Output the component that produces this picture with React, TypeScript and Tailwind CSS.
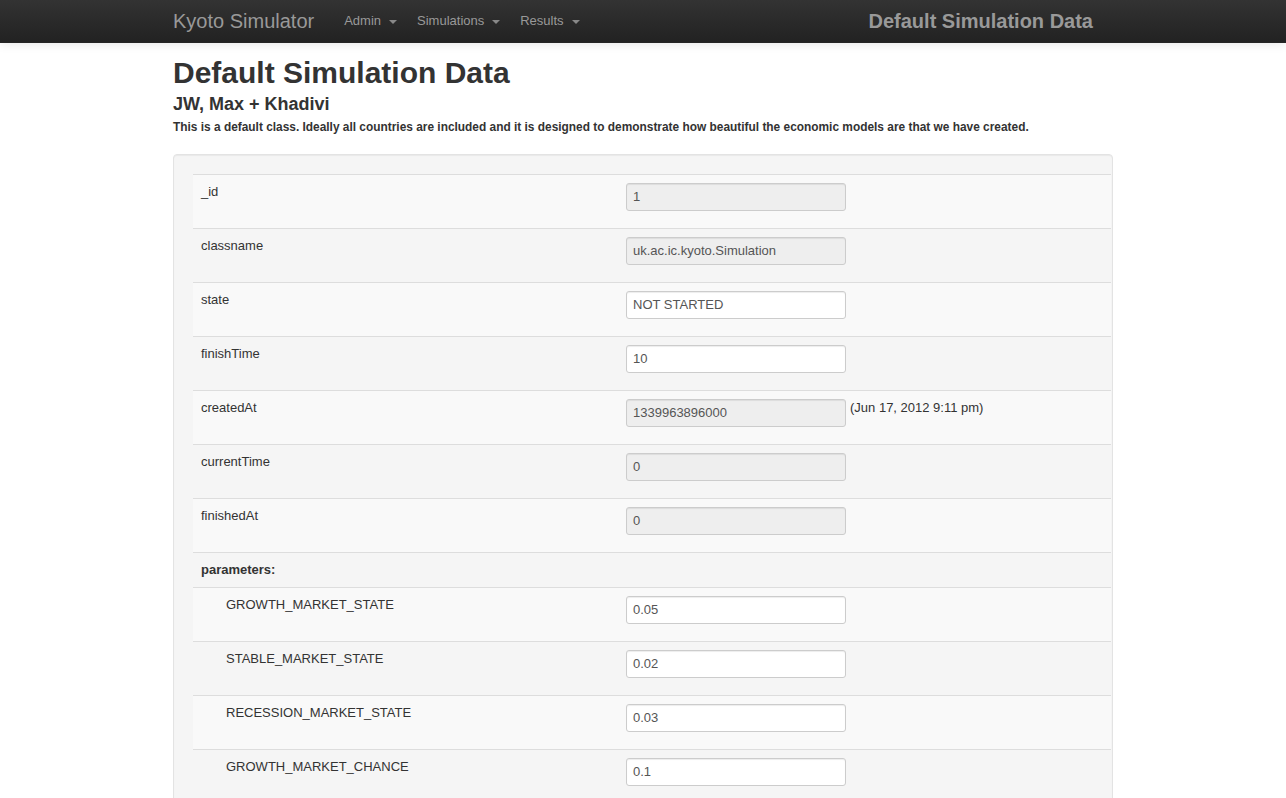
import { ReactNode } from 'react'

type Row = { label: string; value: string; disabled?: boolean; note?: string; indent?: boolean }

const FIELDS: Row[] = [
    { label: '_id', value: '1', disabled: true },
    { label: 'classname', value: 'uk.ac.ic.kyoto.Simulation', disabled: true },
    { label: 'state', value: 'NOT STARTED' },
    { label: 'finishTime', value: '10' },
    { label: 'createdAt', value: '1339963896000', disabled: true, note: '(Jun 17, 2012 9:11 pm)' },
    { label: 'currentTime', value: '0', disabled: true },
    { label: 'finishedAt', value: '0', disabled: true },
]

const PARAMS: Row[] = [
    { label: 'GROWTH_MARKET_STATE', value: '0.05', indent: true },
    { label: 'STABLE_MARKET_STATE', value: '0.02', indent: true },
    { label: 'RECESSION_MARKET_STATE', value: '0.03', indent: true },
    { label: 'GROWTH_MARKET_CHANCE', value: '0.1', indent: true },
]

function Caret() {
    return <span className="inline-block ml-[8px] mt-[1px] w-0 h-0 border-l-[4px] border-r-[4px] border-t-[4px] border-l-transparent border-r-transparent border-t-[#888] align-middle" />
}

function Tr({ odd, children, h = 'h-[54px]' }: { odd: boolean; children: ReactNode; h?: string }) {
    return (
        <div className={`flex border-t border-[#ddd] ${h} ${odd ? 'bg-[#f9f9f9]' : ''}`}>
            {children}
        </div>
    )
}

export default function App() {
    let i = 0
    return (
        <div className="h-[798px] overflow-hidden bg-white text-[#333] font-['Liberation_Sans',Arial,sans-serif] text-[13px] leading-[18px]">
            {/* Navbar */}
            <div className="h-[43px] bg-gradient-to-b from-[#333] to-[#222] border-b border-[#252525] shadow-[0_1px_10px_rgba(0,0,0,0.1)]">
                <div className="w-[940px] mx-auto flex items-center h-[42px]">
                    <span className="text-[20px] text-[#999] mr-[20px] leading-[20px]">Kyoto Simulator</span>
                    <div className="flex text-[13px] text-[#999]">
                        <span className="px-[10px] flex items-center">Admin<Caret /></span>
                        <span className="px-[10px] flex items-center">Simulations<Caret /></span>
                        <span className="px-[10px] flex items-center">Results<Caret /></span>
                    </div>
                    <span className="ml-auto mr-[20px] text-[20px] font-bold text-[#999]">Default Simulation Data</span>
                </div>
            </div>

            <div className="w-[940px] mx-auto">
                <h1 className="text-[30px] font-bold leading-[36px] mt-[12px]">Default Simulation Data</h1>
                <h3 className="text-[18px] font-bold leading-[24px] mt-[1px]">JW, Max + Khadivi</h3>
                <p className="text-[11.9px] font-bold leading-[18px] mt-[2px]">This is a default class. Ideally all countries are included and it is designed to demonstrate how beautiful the economic models are that we have created.</p>

                {/* Well */}
                <div className="mt-[18px] bg-[#f5f5f5] border border-[#e3e3e3] rounded-[4px] shadow-[inset_0_1px_1px_rgba(0,0,0,0.05)] pt-[19px] pl-[19px] pr-px h-[700px]">
                    {FIELDS.map(r => {
                        const odd = i++ % 2 === 0
                        return (
                            <Tr key={r.label} odd={odd}>
                                <div className="w-[424px] p-[8px]">{r.label}</div>
                                <div className="flex-1 p-[8px] flex items-start">
                                    <div className={`ml-[1px] w-[220px] h-[28px] px-[6px] py-[4px] border border-[#ccc] rounded-[3px] shadow-[inset_0_1px_1px_rgba(0,0,0,0.075)] text-[#555] ${r.disabled ? 'bg-[#eee]' : 'bg-white'}`}>
                                        {r.value}
                                    </div>
                                    {r.note && <span className="ml-[4px]">{r.note}</span>}
                                </div>
                            </Tr>
                        )
                    })}
                    <Tr odd={false} h="h-[35px]">
                        <div className="p-[8px] font-bold">parameters:</div>
                    </Tr>
                    {PARAMS.map((r, k) => (
                        <Tr key={r.label} odd={k % 2 === 0}>
                            <div className="w-[424px] p-[8px] pl-[33px]">{r.label}</div>
                            <div className="flex-1 p-[8px] flex items-start">
                                <div className="ml-[1px] w-[220px] h-[28px] px-[6px] py-[4px] border border-[#ccc] rounded-[3px] shadow-[inset_0_1px_1px_rgba(0,0,0,0.075)] text-[#555] bg-white">
                                    {r.value}
                                </div>
                            </div>
                        </Tr>
                    ))}
                </div>
            </div>
        </div>
    )
}
